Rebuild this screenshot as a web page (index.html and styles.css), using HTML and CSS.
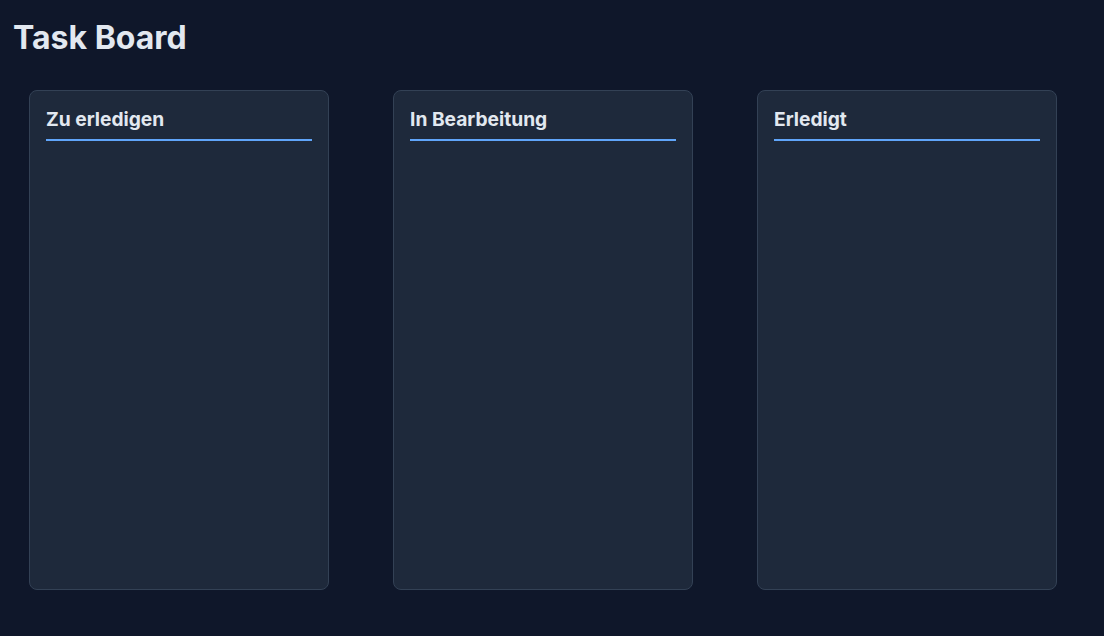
FILE: index.html
```html
<!DOCTYPE html>
<html lang="de">
<head>
<meta charset="utf-8">
<title>Task Board</title>
<link rel="stylesheet" href="styles.css">
</head>
<body>
<header class="page-header">
  <h1 class="page-title">Task Board</h1>
</header>
<main class="board">
  <section class="column">
    <h2 class="column-title">Zu erledigen</h2>
    <div class="column-body"></div>
  </section>
  <section class="column">
    <h2 class="column-title">In Bearbeitung</h2>
    <div class="column-body"></div>
  </section>
  <section class="column">
    <h2 class="column-title">Erledigt</h2>
    <div class="column-body"></div>
  </section>
</main>
</body>
</html>
```
FILE: styles.css
```css
* { box-sizing: border-box; }
html, body {
  margin: 0;
  background: #0f172a;
}
body {
  font-family: Inter, "Noto Sans", sans-serif;
  color: #e2e8f0;
  padding: 19px 12px 16px;
  min-height: 636px;
}
.page-header {
  padding-left: 1px;
}
.page-title {
  margin: 0;
  font-size: 32px;
  font-weight: 700;
  line-height: 1.2;
  color: #e2e8f0;
}
.board {
  display: flex;
  gap: 64px;
  padding: 33px 0 0 17px;
}
.column {
  width: 300px;
  height: 500px;
  background: #1e293b;
  border: 1px solid #334155;
  border-radius: 8px;
  padding: 16px;
  display: flex;
  flex-direction: column;
}
.column-title {
  margin: 0;
  font-size: 19.2px;
  font-weight: 700;
  line-height: 23px;
  padding-top: 1px;
  padding-bottom: 8px;
  border-bottom: 2px solid #60a5fa;
  color: #e2e8f0;
}
.column-body {
  flex: 1;
}
```
